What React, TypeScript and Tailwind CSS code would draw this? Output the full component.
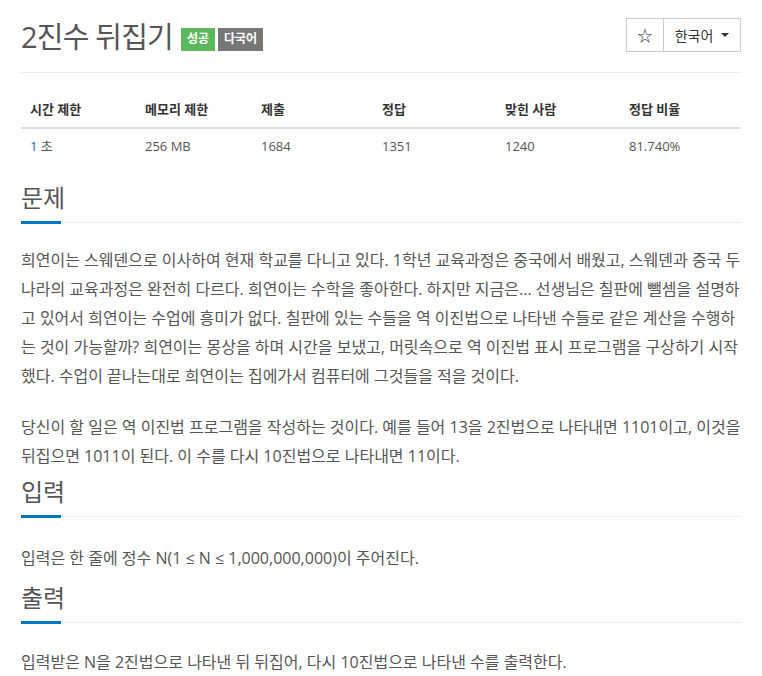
const font = { fontFamily: '"Open Sans", "Noto Sans CJK KR", sans-serif' };

function Headline({ title, gap = "mb-[23px]" }: { title: string; gap?: string }) {
  return (
    <div className={`border-b border-dotted border-[#dbe2ec] ${gap}`}>
      <h2 className="inline-block border-b-[3px] border-[#0076c0] -mb-[2px] pb-[8px] text-[24px] leading-[30px] text-[#555] font-normal w-[40px] whitespace-nowrap">
        {title}
      </h2>
    </div>
  );
}

const stats = [
  { label: "시간 제한", value: "1 초" },
  { label: "메모리 제한", value: "256 MB" },
  { label: "제출", value: "1684" },
  { label: "정답", value: "1351" },
  { label: "맞힌 사람", value: "1240" },
  { label: "정답 비율", value: "81.740%" },
];

export default function App() {
  return (
    <div className="w-[762px] bg-white text-[#555]" style={font}>
      <div className="mx-[21px] w-[720px]">
        {/* title */}
        <div className="flex items-start justify-between pt-[17px] pb-[15px] border-b border-[#eee]">
          <div className="flex items-center gap-[8px]">
            <h1 className="text-[29px] leading-[40px] font-normal text-[#555] tracking-[-0.8px]">2진수 뒤집기</h1>
            <div className="flex gap-[3px] mt-[4px]">
              <span className="h-[23px] px-[6px] flex items-center bg-[#5cb85c] text-white text-[12px] font-bold">성공</span>
              <span className="h-[23px] px-[6px] flex items-center bg-[#777] text-white text-[12px] font-bold">다국어</span>
            </div>
          </div>
          <div className="flex mt-[1px] border border-[#ccc] h-[34px] text-[14px] text-[#333]">
            <div className="w-[37px] flex items-center justify-center border-r border-[#ccc] text-[15px]">☆</div>
            <div className="w-[76px] flex items-center justify-center gap-[8px]">
              <span>한국어</span>
              <span className="w-0 h-0 border-l-[4px] border-r-[4px] border-t-[4px] border-l-transparent border-r-transparent border-t-[#333]" />
            </div>
          </div>
        </div>

        {/* stats table */}
        <div className="mt-[20px] text-[13px]">
          <div className="grid grid-cols-[115px_116px_121px_123px_124px_121px] border-b-2 border-[#ddd] h-[36px] items-center font-bold text-[#333]">
            {stats.map((s) => (
              <div key={s.label} className="pl-[9px]">{s.label}</div>
            ))}
          </div>
          <div className="grid grid-cols-[115px_116px_121px_123px_124px_121px] h-[36px] items-center text-[#555]">
            {stats.map((s, i) => (
              <div key={s.label} className="pl-[9px]">
                {i === 0 ? (
                  <>
                    <span className="text-[#0076c0]">1</span> 초
                  </>
                ) : (
                  s.value
                )}
              </div>
            ))}
          </div>
        </div>

        {/* problem */}
        <div className="mt-[18px]">
          <Headline title="문제" />
          <div className="text-[16px] leading-[29px] text-[#555] break-all">
            <p className="mb-[22px]">
              희연이는 스웨덴으로 이사하여 현재 학교를 다니고 있다. 1학년 교육과정은 중국에서 배웠고, 스웨덴과 중국 두 나라의 교육과정은 완전히 다르다. 희연이는 수학을 좋아한다. 하지만 지금은... 선생님은 칠판에 뺄셈을 설명하고 있어서 희연이는 수업에 흥미가 없다. 칠판에 있는 수들을 역 이진법으로 나타낸 수들로 같은 계산을 수행하는 것이 가능할까? 희연이는 몽상을 하며 시간을 보냈고, 머릿속으로 역 이진법 표시 프로그램을 구상하기 시작했다. 수업이 끝나는대로 희연이는 집에가서 컴퓨터에 그것들을 적을 것이다.
            </p>
            <p>
              당신이 할 일은 역 이진법 프로그램을 작성하는 것이다. 예를 들어 13을 2진법으로 나타내면 1101이고, 이것을 뒤집으면 1011이 된다. 이 수를 다시 10진법으로 나타내면 11이다.
            </p>
          </div>
        </div>

        <div className="mt-[6px]">
          <Headline title="입력" gap="mb-[27px]" />
          <p className="text-[16px] leading-[29px]">입력은 한 줄에 정수 N(1 ≤ N ≤ 1,000,000,000)이 주어진다.</p>
        </div>

        <div className="mt-[10px] pb-[20px]">
          <Headline title="출력" gap="mb-[25px]" />
          <p className="text-[16px] leading-[29px]">입력받은 N을 2진법으로 나타낸 뒤 뒤집어, 다시 10진법으로 나타낸 수를 출력한다.</p>
        </div>
      </div>
    </div>
  );
}
